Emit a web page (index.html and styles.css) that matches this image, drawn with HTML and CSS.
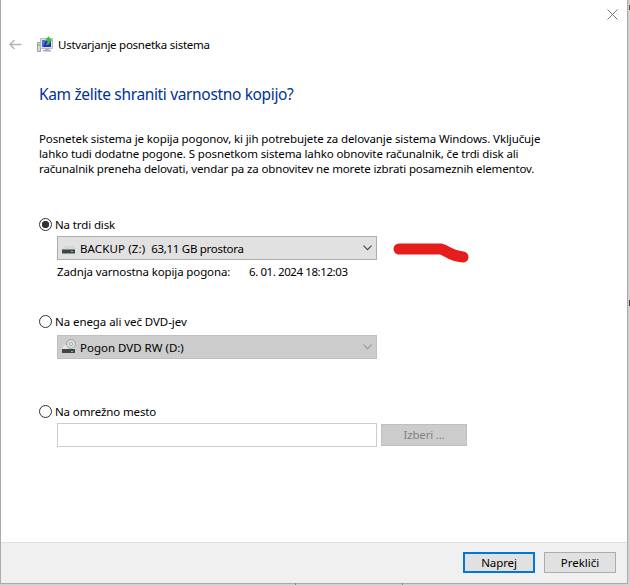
FILE: index.html
```html
<!DOCTYPE html>
<html lang="sl">
<head>
<meta charset="utf-8">
<title>Ustvarjanje posnetka sistema</title>
<link rel="stylesheet" href="styles.css">
</head>
<body>
<div class="desktop">
<main class="dialog">
  <header class="titlebar">
    <svg class="close" viewBox="0 0 11 11"><path d="M.5.5l10 10M10.500.5l-10 10"/></svg>
  </header>
  <div class="heading">
    <svg class="back" viewBox="0 0 13 11"><path d="M12.500 5.500H1M5.500 1L1 5.500L5.500 10"/></svg>
    <svg class="app-icon" viewBox="0 0 16 16">
      <path d="M.5 6.500h3v9h-3z" fill="#d5d8d9" stroke="#9ba1a3"/><path d="M1.500 8h1v2h-1z" fill="#4fae3d"/>
      <path d="M3.500 2.500h12v10h-12z" fill="#dfe3e5" stroke="#b5babd"/>
      <path d="M5 4h9v7H5z" fill="#1d35b5"/><path d="M5 4h4l-3 7H5z" fill="#5270d8"/>
      <path d="M8 13h4v1h2v1.500H6V14h2z" fill="#a9adaf"/>
      <path d="M9 8.500c2-1 2-2.500 1.500-4H8L11.500.5l3.500 4h-2c.3 2.500-1.500 4.500-4 4z" fill="#38bd37" stroke="#70ce65" stroke-width=".5"/>
    </svg>
    <span class="app-title">Ustvarjanje posnetka sistema</span>
  </div>
  <section class="content">
    <h1><span>Kam želite shraniti varnostno kopijo?</span></h1>
    <p class="intro"><span class="l1">Posnetek sistema je kopija pogonov, ki jih potrebujete za delovanje sistema Windows. Vključuje</span><br><span class="l2">lahko tudi dodatne pogone. S posnetkom sistema lahko obnovite računalnik, če trdi disk ali</span><br><span class="l3">računalnik preneha delovati, vendar pa za obnovitev ne morete izbrati posameznih elementov.</span></p>
    <div class="option disk">
      <div class="radio-row"><i class="radio checked"></i><span class="t-disk">Na trdi disk</span></div>
      <div class="row">
        <div class="combo">
          <svg class="drive" viewBox="0 0 14 16"><path d="M2 6h10l2 4H0z" fill="#d3d5d6"/><path d="M0 9.500h13v4H0z" fill="#414548"/><path d="M9 11h2v1H9z" fill="#48e24e"/></svg>
          <span class="t-backup"><span class="t-label">BACKUP (Z:)</span>&nbsp; <span class="t-size">63,11 GB prostora</span></span>
          <svg class="chevron" viewBox="0 0 9 6"><path d="M.5.700l4 4 4-4"/></svg>
        </div>
        <svg class="stroke" viewBox="0 0 80 24"><path d="M9 11H51C58 13 60 18 73 19"/></svg>
      </div>
      <div class="last"><span class="t-last">Zadnja varnostna kopija pogona:</span><span class="t-date">6. 01. 2024 18:12:03</span></div>
    </div>
    <div class="option dvd">
      <div class="radio-row"><i class="radio"></i><span class="t-dvd">Na enega ali več DVD-jev</span></div>
      <div class="combo disabled">
        <svg class="drive" viewBox="0 0 14 16"><path d="M2 6h10l1 4H0z" fill="#e3e5e6"/><circle cx="9" cy="5" r="4.500" fill="#d9dbdb" stroke="#999c9d" stroke-width=".8"/><circle cx="9" cy="5" r="1.500" fill="#f5f5f5" stroke="#999c9d" stroke-width=".8"/><path d="M0 10h13v4H0z" fill="#414548"/><path d="M9 12h2v1H9z" fill="#48e24e"/></svg>
        <span class="t-rw">Pogon DVD RW (D:)</span>
        <svg class="chevron" viewBox="0 0 9 6"><path d="M.5.700l4 4 4-4"/></svg>
      </div>
    </div>
    <div class="option network">
      <div class="radio-row"><i class="radio"></i><span class="t-net">Na omrežno mesto</span></div>
      <div class="row"><div class="field"></div><div class="button browse"><span>Izberi ...</span></div></div>
    </div>
  </section>
  <footer><div class="button primary"><span>Naprej</span></div><div class="button"><span>Prekliči</span></div></footer>
</main>
<i class="edge top"></i><i class="edge mid"></i><i class="tick one"></i><i class="tick two"></i>
</div>
</body>
</html>
```
FILE: styles.css
```css
* { box-sizing: border-box; }
body { margin: 0; overflow: hidden; font: 11.5px/15px "Noto Sans", "Open Sans", sans-serif; color: #000; }
svg { display: block; flex: none; }
span { white-space: nowrap; }
.desktop { position: relative; width: 630px; height: 585px; background: #d2d2d2; }
.dialog { width: 628px; height: 584px; display: flex; flex-direction: column; background: #fff; border: 1px solid #aaa; border-top: 0; }
.titlebar { height: 29px; padding: 9px 9px 0 0; display: flex; justify-content: flex-end; }
.close { width: 11px; height: 11px; fill: none; stroke: #777; }
.heading { height: 30px; padding-left: 8px; display: flex; align-items: center; }
.back { width: 13px; height: 11px; fill: none; stroke: #b4b4b4; stroke-width: 1.5; }
.app-icon { width: 16px; height: 16px; margin: 0 5px 0 15px; }
.app-title { letter-spacing: -.25px; }
.content { padding: 24px 0 0 38px; flex: 1; }
h1 { margin: 0; font-size: 15.5px; line-height: 23px; font-weight: 400; letter-spacing: -.35px; color: #039; }
.intro { margin: 25px 0 0; height: 45px; }
.l1 { letter-spacing: -.11px; }
.l2 { letter-spacing: -.12px; }
.l3 { letter-spacing: -.14px; }
.option { height: 97px; }
.disk { margin-top: 41px; }
.dvd { height: 90px; }
.radio-row { height: 15px; display: flex; align-items: center; gap: 3px; }
.radio { width: 13px; height: 13px; border: 1px solid #333; border-radius: 50%; background: #fff; }
.checked { background: radial-gradient(circle, #333 0 3.4px, #fff 4px); }
.row { display: flex; align-items: flex-start; }
.combo { width: 320px; height: 24px; margin: 4px 0 0 18px; padding: 0 4px; display: flex; align-items: center; background: #e1e1e1; border: 1px solid #adadad; }
.combo.disabled { margin-top: 6px; background: #ccc; border-color: #bfbfbf; }
.drive { width: 14px; height: 16px; margin-right: 4px; }
.chevron { width: 9px; height: 6px; margin-left: auto; fill: none; stroke: #444; stroke-width: 1.1; }
.disabled .chevron { stroke: #999; }
.stroke { width: 80px; height: 24px; margin: 6px 0 0 13px; overflow: visible; fill: none; stroke: #e71d1d; stroke-width: 11; stroke-linecap: round; stroke-linejoin: round; }
.last { display: flex; margin: 2px 0 0 18px; }
.t-last { width: 192px; letter-spacing: -.13px; }
.t-date { letter-spacing: -.41px; }
.t-disk, .t-net { letter-spacing: -.12px; }
.t-label { letter-spacing: .12px; }
.t-size { letter-spacing: -.29px; }
.t-dvd { letter-spacing: -.07px; }
.field { width: 320px; height: 24px; margin: 4px 4px 0 18px; border: 1px solid #ccc; background: #fff; }
.button { width: 72px; height: 21px; display: flex; align-items: center; justify-content: center; background: #e1e1e1; border: 1px solid #adadad; }
.browse { width: 86px; height: 22px; margin-top: 5px; padding-bottom: 1px; background: #ccc; border-color: #bfbfbf; color: #838383; letter-spacing: -.2px; }
.primary { border: 2px solid #0078d7; letter-spacing: -.1px; }
footer { height: 41px; padding: 9px 11px 0 0; display: flex; justify-content: flex-end; gap: 9px; background: #f0f0f0; border-top: 1px solid #dfdfdf; }
.edge { position: absolute; left: 629px; width: 1px; }
.edge.top { top: 5px; height: 5px; background: #6b4a2c; }
.edge.mid { top: 300px; height: 6px; background: #4e3558; }
.tick { position: absolute; top: 583px; width: 1px; height: 2px; background: #888; }
.tick.one { left: 295px; }
.tick.two { left: 402px; }
```
